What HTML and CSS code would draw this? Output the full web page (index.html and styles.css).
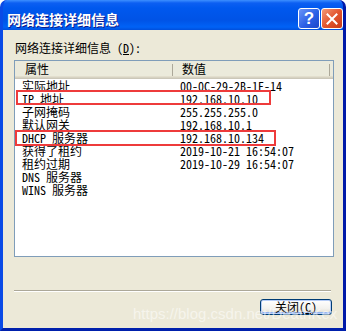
FILE: index.html
```html
<!DOCTYPE html>
<html lang="zh-CN">
<head>
  <meta charset="UTF-8">
  <title>网络连接详细信息</title>
  <link rel="stylesheet" href="styles.css">
</head>
<body>

  <div class="window">
    <div class="titlebar">
      <span class="title">网络连接详细信息</span>
      <span class="tb-btn help">?</span>
      <span class="tb-btn close">
        <svg width="12" height="12" viewBox="0 0 12 12">
          <path d="M1.5 1.5 L10.5 10.5 M10.5 1.5 L1.5 10.5" stroke="#fff" stroke-width="2" stroke-linecap="square"/>
        </svg>
      </span>
    </div>

    <div class="client">
      <div class="caption">网络连接详细信息 (<u>D</u>):</div>

      <div class="list">
        <div class="list-head">
          <div class="col-prop">属性</div>
          <div class="col-val">数值</div>
        </div>
        <div class="row"><span class="c1">实际地址</span><span class="c2">00-0C-29-2B-1E-14</span></div>
        <div class="row"><span class="c1">IP 地址</span><span class="c2">192.168.10.10</span></div>
        <div class="row"><span class="c1">子网掩码</span><span class="c2">255.255.255.0</span></div>
        <div class="row"><span class="c1">默认网关</span><span class="c2">192.168.10.1</span></div>
        <div class="row"><span class="c1">DHCP 服务器</span><span class="c2">192.168.10.134</span></div>
        <div class="row"><span class="c1">获得了租约</span><span class="c2">2019-10-21 16:54:07</span></div>
        <div class="row"><span class="c1">租约过期</span><span class="c2">2019-10-29 16:54:07</span></div>
        <div class="row"><span class="c1">DNS 服务器</span><span class="c2"></span></div>
        <div class="row"><span class="c1">WINS 服务器</span><span class="c2"></span></div>

        <div class="mark mark-ip"></div>
        <div class="mark mark-dhcp"></div>
      </div>

      <div class="sep"></div>

      <div class="actions">
        <button class="btn" type="button">关闭(<u>C</u>)</button>
      </div>
    </div>

    <div class="watermark">https://blog.csdn.net/DeathKex</div>
  </div>

</body>
</html>
```

FILE: styles.css
```css
body {
  margin: 0;
  background-color: #fff;
  font-family: "Noto Sans Mono CJK SC", "Noto Sans CJK SC", monospace;
  font-size: 12px;
  color: #000;
}
.window {
  position: relative;
  width: 346px;
  height: 331px;
  box-sizing: border-box;
  display: flex;
  flex-direction: column;
  background-color: #0831d9;
  border-left: 3px solid #0a4ae6;
  border-right: 3px solid #0019a8;
  border-bottom: 3px solid #0020ac;
  border-radius: 7px 7px 0 0;
  overflow: hidden;
}
.titlebar {
  height: 30px;
  margin: 0 -3px;
  box-sizing: border-box;
  padding: 7px 3px 0 7px;
  display: flex;
  align-items: center;
  gap: 1px;
  border-radius: 7px 7px 0 0;
  background: linear-gradient(#3d8fff 0, #0c5ff2 3px, #0058ee 8px, #0053e6 20px, #0062f6 27px, #004fdc 30px);
  color: #fff;
}
.title {
  flex: 1;
  font-family: "Noto Sans CJK SC", sans-serif;
  font-weight: bold;
  font-size: 14px;
  line-height: 16px;
  text-shadow: 1px 1px #0a1a8c;
}
.tb-btn {
  width: 22px;
  height: 21px;
  box-sizing: border-box;
  border: 1px solid #fff;
  border-radius: 3px;
  display: flex;
  align-items: center;
  justify-content: center;
}
.help {
  background: linear-gradient(135deg, #6a95f7, #2b5fe6 55%, #1c46c8);
  font-family: "Liberation Sans", sans-serif;
  font-weight: bold;
  font-size: 17px;
  line-height: 17px;
}
.close {
  background: linear-gradient(135deg, #f29a78, #e3562f 50%, #c83a19);
}
.client {
  flex: 1;
  background-color: #ece9d8;
  display: flex;
  flex-direction: column;
}
.caption {
  margin: 11px 0 0 12px;
  line-height: 14px;
}
.list {
  position: relative;
  margin: 5px 0 0 11px;
  width: 320px;
  height: 197px;
  box-sizing: border-box;
  border: 1px solid #7f9db9;
  background-color: #fff;
}
.list-head {
  display: flex;
  height: 18px;
  background-color: #ebeadb;
  box-shadow: inset 0 -1px #cbc7b8, inset 0 -2px #d6d2c2, inset 0 -3px #e2decd;
  line-height: 16px;
}
.col-prop, .col-val {
  box-sizing: border-box;
  background: linear-gradient(#aca899, #aca899) right 1px top 3px / 1px 12px no-repeat;
}
.col-prop {
  width: 159px;
  padding-left: 10px;
}
.col-val {
  width: 157px;
  padding-left: 8px;
}
.row {
  display: flex;
  height: 13px;
  line-height: 13px;
  white-space: nowrap;
}
.c1 {
  width: 159px;
  padding-left: 7px;
  box-sizing: border-box;
}
.c2 {
  padding-left: 6px;
}
.mark {
  position: absolute;
  box-sizing: border-box;
  border: 2px solid #ee3b3b;
}
.mark-ip {
  left: 1px;
  top: 29px;
  width: 255px;
  height: 15px;
}
.mark-dhcp {
  left: 0;
  top: 69px;
  width: 261px;
  height: 16px;
}
.sep {
  margin: 33px 0 0 11px;
  width: 317px;
  height: 1px;
  background-color: #aca899;
  border-bottom: 1px solid #fff;
}
.actions {
  display: flex;
  justify-content: flex-end;
  padding: 7px 11px 0 0;
}
.btn {
  width: 72px;
  height: 16px;
  padding: 0;
  font-family: inherit;
  font-size: 12px;
  line-height: 12px;
  color: #000;
  border: 1px solid #003c74;
  border-radius: 3px;
  background: linear-gradient(#fff, #f3f2ee 60%, #dcd8cc);
  box-shadow: inset 0 0 0 1px #b6cdf7, inset 0 -1px 0 1px #8fb0ee;
}
.watermark {
  position: absolute;
  left: 130px;
  top: 305px;
  font-family: "Liberation Sans", Arial, sans-serif;
  font-size: 15px;
  color: rgba(255, 255, 255, 0.55);
  white-space: nowrap;
  pointer-events: none;
}
```
